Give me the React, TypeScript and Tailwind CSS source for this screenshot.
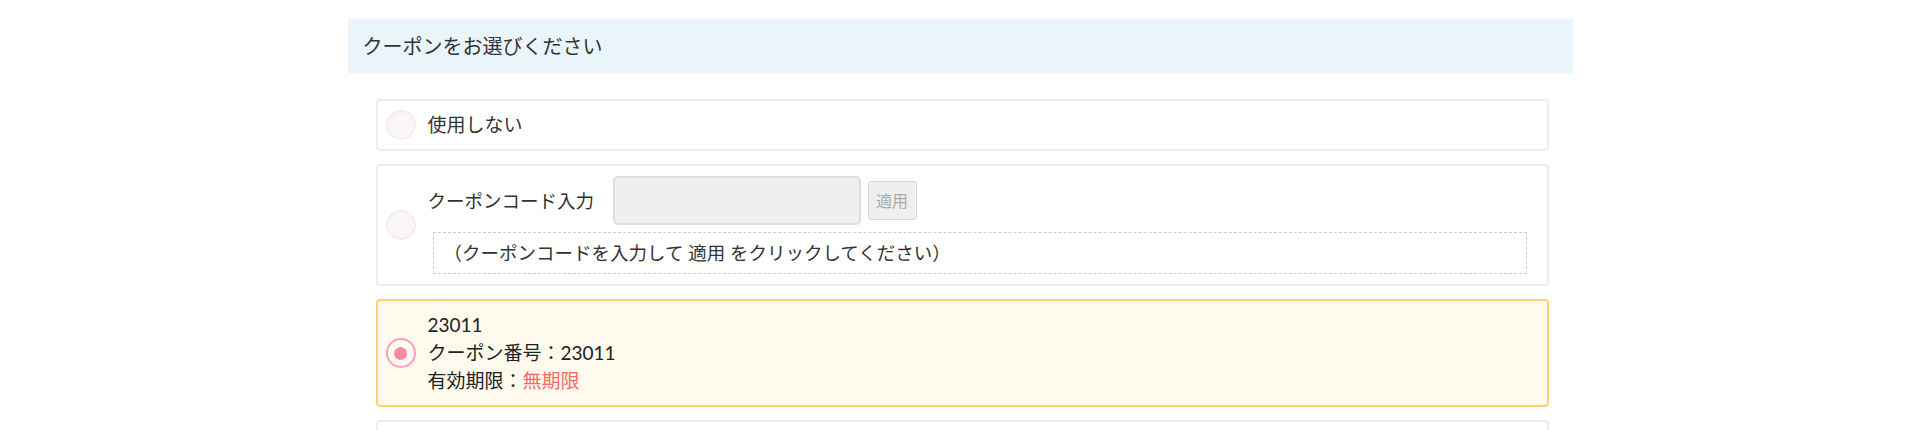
import React from "react";

const font = { fontFamily: 'Lato, "Noto Sans CJK JP", sans-serif' };

function Radio({ checked }: { checked?: boolean }) {
  if (checked) {
    return (
      <div className="w-[30px] h-[30px] shrink-0 rounded-full border-2 border-[#f9a2b3] bg-[#fff7f8] flex items-center justify-center">
        <div className="w-[13px] h-[13px] rounded-full bg-[#f68ba0]" />
      </div>
    );
  }
  return <div className="w-[30px] h-[30px] shrink-0 rounded-full border-2 border-[#efefef] bg-[#fdf6f6]" />;
}

export default function App() {
  return (
    <div className="w-full min-h-[430px] bg-white pt-[19px] text-[#333]" style={font}>
      <div className="mx-auto w-[1225px]">
        <div className="h-[54px] bg-[#eaf5fb] px-[15px] flex items-center text-[20px] text-[#333]">
          クーポンをお選びください
        </div>
        <div className="ml-[28px] mr-[24px] mt-[26px] flex flex-col gap-[13px]">
          <div className="flex items-center gap-[12px] rounded-[4px] border-2 border-[#ededed] bg-white pl-[8px] py-[9px]">
            <Radio />
            <div className="text-[19px] leading-[28px]">使用しない</div>
          </div>

          <div className="flex items-center gap-[12px] rounded-[4px] border-2 border-[#ededed] bg-white pl-[8px] pt-[10px] pb-[10px]">
            <Radio />
            <div className="flex-1 flex flex-col">
              <div className="flex items-center">
                <div className="text-[18.5px] leading-[28px] w-[185px]">クーポンコード入力</div>
                <div className="w-[248px] h-[49px] rounded-[5px] border-2 border-[#dedede] bg-[#efefef]" />
                <div className="ml-[7px] w-[49px] h-[39px] rounded-[3px] border border-[#d8d8d8] bg-[#efefef] flex items-center justify-center text-[16px] text-[#aaa]">
                  適用
                </div>
              </div>
              <div className="ml-[5px] mr-[20px] mt-[7px] h-[42px] border border-dashed border-[#cccccc] px-[10px] flex items-center text-[18.5px] leading-[28px]">
                （クーポンコードを入力して 適用 をクリックしてください）
              </div>
            </div>
          </div>

          <div className="flex items-center gap-[12px] rounded-[4px] border-2 border-[#fdd26c] bg-[#fffaed] pl-[8px] py-[10px]">
            <Radio checked />
            <div className="flex flex-col text-[19px] leading-[28px] text-[#222]">
              <div>23011</div>
              <div>クーポン番号：23011</div>
              <div>
                有効期限：<span className="text-[#f06b6b]">無期限</span>
              </div>
            </div>
          </div>

          <div className="h-[106px] rounded-[4px] border-2 border-[#ededed] bg-white" />
        </div>
      </div>
    </div>
  );
}
